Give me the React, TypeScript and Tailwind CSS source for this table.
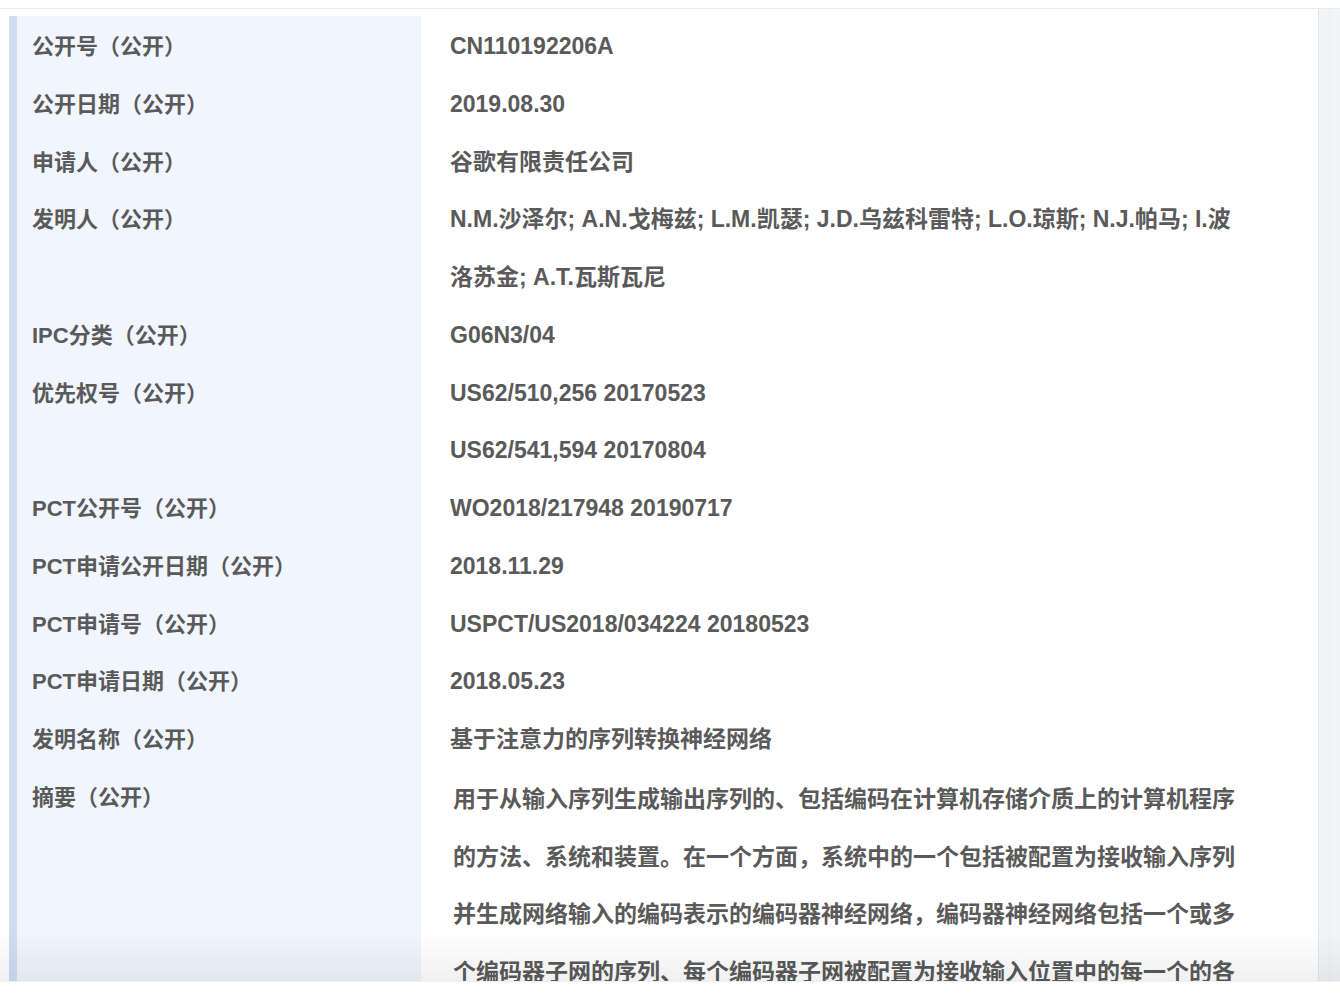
import { Fragment } from 'react';

type Row = { label: string; values: string[] };

const rows: Row[] = [
  { label: '公开号（公开）', values: ['CN110192206A'] },
  { label: '公开日期（公开）', values: ['2019.08.30'] },
  { label: '申请人（公开）', values: ['谷歌有限责任公司'] },
  {
    label: '发明人（公开）',
    values: ['N.M.沙泽尔; A.N.戈梅兹; L.M.凯瑟; J.D.乌兹科雷特; L.O.琼斯; N.J.帕马; I.波洛苏金; A.T.瓦斯瓦尼'],
  },
  { label: 'IPC分类（公开）', values: ['G06N3/04'] },
  { label: '优先权号（公开）', values: ['US62/510,256 20170523', 'US62/541,594 20170804'] },
  { label: 'PCT公开号（公开）', values: ['WO2018/217948 20190717'] },
  { label: 'PCT申请公开日期（公开）', values: ['2018.11.29'] },
  { label: 'PCT申请号（公开）', values: ['USPCT/US2018/034224 20180523'] },
  { label: 'PCT申请日期（公开）', values: ['2018.05.23'] },
  { label: '发明名称（公开）', values: ['基于注意力的序列转换神经网络'] },
];

const abstract =
  '用于从输入序列生成输出序列的、包括编码在计算机存储介质上的计算机程序的方法、系统和装置。在一个方面，系统中的一个包括被配置为接收输入序列并生成网络输入的编码表示的编码器神经网络，编码器神经网络包括一个或多个编码器子网的序列、每个编码器子网被配置为接收输入位置中的每一个的各个子网输入，并生成各个子网输出。';

// Latin runs render bold, CJK runs stay semibold
const Mixed = ({ text }: { text: string }) => (
  <>
    {text.split(/([\x20-\x7e]+)/).map((part, i) =>
      part === '' ? null : /^[\x20-\x7e]+$/.test(part) ? (
        <span key={i} className="font-bold">
          {part}
        </span>
      ) : (
        <Fragment key={i}>{part}</Fragment>
      )
    )}
  </>
);

export default function App() {
  const font = { fontFamily: '"Liberation Sans", "Noto Sans CJK SC", sans-serif' };

  return (
    <div className="relative w-[1340px] h-[1002px] overflow-hidden bg-white" style={font}>
      <div className="h-[9px] bg-white border-b border-[#ececec]" />

      <div className="flex h-[972px]">
        <div className="flex-1 pt-[7px] pl-[9px] overflow-hidden">
          <div className="flex min-h-full text-[#5a5a5a] font-semibold leading-[57.75px]">
            {/* label column */}
            <div className="w-[412px] shrink-0 bg-[#f0f5fe] border-l-[8px] border-[#cfdcf3] pl-[15px] pt-[2px] text-[22px]">
              {rows.map((row) => (
                <div key={row.label}>
                  {row.values.map((v, i) => (
                    <div key={i} className={i === 0 ? '' : 'invisible'}>
                      {i === 0 ? <Mixed text={row.label} /> : '\u00a0'}
                    </div>
                  ))}
                  {row.label === '发明人（公开）' && <div>&nbsp;</div>}
                </div>
              ))}
              <div>摘要（公开）</div>
            </div>

            {/* value column */}
            <div className="pl-[29px] pt-[2px] text-[23px]">
              {rows.map((row) => (
                <div key={row.label} className="w-[790px]">
                  {row.values.map((v, i) => (
                    <div key={i}>
                      <Mixed text={v} />
                    </div>
                  ))}
                </div>
              ))}
              <div className="w-[788px] pl-[3px] pt-[2px]">{abstract}</div>
            </div>
          </div>
        </div>

        {/* scrollbar track */}
        <div className="w-[22px] shrink-0 bg-[#f3f4f8] border-l border-[#e6e8ee] flex justify-center">
          <div className="w-px h-full bg-[#ebedf2]" />
        </div>
      </div>

      {/* bottom fade */}
      <div className="pointer-events-none absolute left-0 right-0 top-[930px] h-[52px] bg-gradient-to-b from-transparent to-black/[0.06]" />
    </div>
  );
}
